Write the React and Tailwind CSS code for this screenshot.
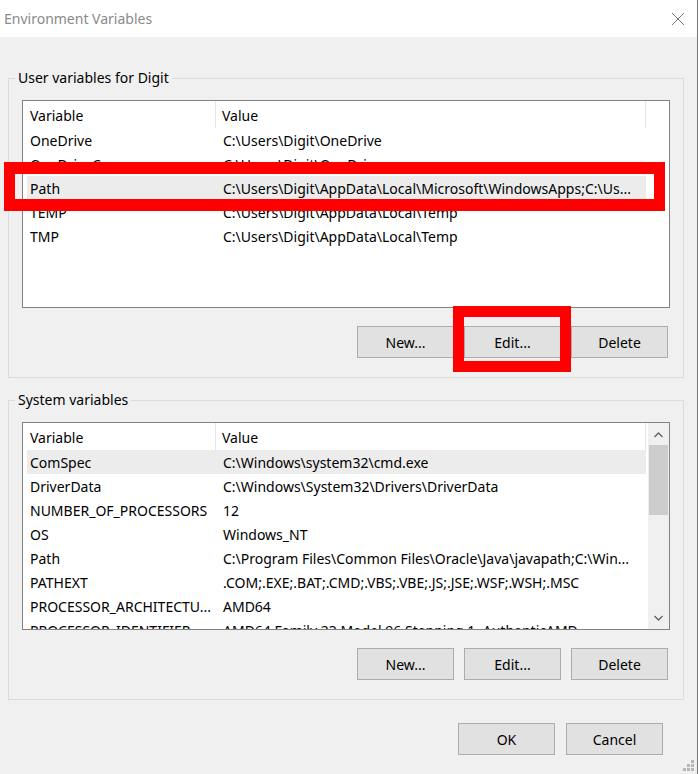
import React from "react";

const userVars = [
  { name: "OneDrive", value: "C:\\Users\\Digit\\OneDrive" },
  { name: "OneDriveConsumer", value: "C:\\Users\\Digit\\OneDrive" },
  { name: "Path", value: "C:\\Users\\Digit\\AppData\\Local\\Microsoft\\WindowsApps;C:\\Us...", selected: true },
  { name: "TEMP", value: "C:\\Users\\Digit\\AppData\\Local\\Temp" },
  { name: "TMP", value: "C:\\Users\\Digit\\AppData\\Local\\Temp" },
];

const systemVars = [
  { name: "ComSpec", value: "C:\\Windows\\system32\\cmd.exe", selected: true },
  { name: "DriverData", value: "C:\\Windows\\System32\\Drivers\\DriverData" },
  { name: "NUMBER_OF_PROCESSORS", value: "12" },
  { name: "OS", value: "Windows_NT" },
  { name: "Path", value: "C:\\Program Files\\Common Files\\Oracle\\Java\\javapath;C:\\Win..." },
  { name: "PATHEXT", value: ".COM;.EXE;.BAT;.CMD;.VBS;.VBE;.JS;.JSE;.WSF;.WSH;.MSC" },
  { name: "PROCESSOR_ARCHITECTU...", value: "AMD64" },
  { name: "PROCESSOR_IDENTIFIER", value: "AMD64 Family 23 Model 96 Stepping 1, AuthenticAMD" },
];

function Button({ children }) {
  return (
    <div className="w-[97px] h-[32px] flex items-center justify-center bg-[#e1e1e1] border border-[#adadad] text-black">
      {children}
    </div>
  );
}

function VarList({ rows, scroll }) {
  return (
    <div className="ml-[13px] w-[648px] h-[208px] bg-white border border-[#828282] flex overflow-hidden">
      <div className="flex-1 overflow-hidden">
        {/* header */}
        <div className="flex h-[27px] items-center">
          <div className="w-[193px] h-full pl-[7px] pt-[2px] flex items-center border-r border-[#e5e5e5]">Variable</div>
          <div className="w-[430px] h-full pl-[6px] pt-[2px] flex items-center border-r border-[#e5e5e5]">Value</div>
        </div>
        {rows.map((r) => (
          <div
            key={r.name}
            className={
              "flex h-[24px] items-center pt-[1px] ml-[4px] w-[619px] whitespace-nowrap " +
              (r.selected ? "bg-[#ececec]" : "")
            }
          >
            <div className="w-[189px] pl-[3px] overflow-hidden">{r.name}</div>
            <div className="flex-1 pl-[7px] overflow-hidden">{r.value}</div>
          </div>
        ))}
      </div>
      {scroll && (
        <div className="w-[21px] h-full bg-[#f0f0f0] flex flex-col items-center">
          <svg width="21" height="22" viewBox="0 0 21 22" className="shrink-0">
            <path d="M6.5 14 L10.5 10 L14.5 14" fill="none" stroke="#606060" strokeWidth="1.3" />
          </svg>
          <div className="w-[19px] h-[70px] bg-[#cdcdcd]" />
          <div className="flex-1" />
          <svg width="21" height="22" viewBox="0 0 21 22" className="shrink-0">
            <path d="M6.5 9 L10.5 13 L14.5 9" fill="none" stroke="#606060" strokeWidth="1.3" />
          </svg>
        </div>
      )}
    </div>
  );
}

function Group({ label, rows, scroll, className }) {
  return (
    <div className={"relative mx-[8px] w-[676px] border border-[#dcdcdc] pt-[21px] pb-[19px] " + className}>
      <span className="absolute left-[6px] top-[-11px] px-[3px] bg-[#f0f0f0] leading-[20px]">{label}</span>
      <VarList rows={rows} scroll={scroll} />
      <div className="flex justify-end gap-[10px] mt-[18px] pr-[15px]">
        <Button>New...</Button>
        <Button>Edit...</Button>
        <Button>Delete</Button>
      </div>
    </div>
  );
}

export default function App() {
  return (
    <div
      className="relative w-[699px] h-[774px] bg-[#f0f0f0] text-[14px] text-black overflow-hidden"
      style={{ fontFamily: '"Noto Sans", "Open Sans", sans-serif' }}
    >
      {/* window right edge */}
      <div className="absolute right-0 top-0 w-[2px] h-full bg-white border-l border-[#777]" />

      {/* title bar */}
      <div className="h-[37px] bg-white flex items-center justify-between pl-[4px] pr-[14px]">
        <span className="text-[#8a8a8a]">Environment Variables</span>
        <svg width="14" height="14" viewBox="0 0 14 14">
          <path d="M1 1 L13 13 M13 1 L1 13" stroke="#777" strokeWidth="1" />
        </svg>
      </div>

      <Group label="User variables for Digit" rows={userVars} className="mt-[41px]" />
      <Group label="System variables" rows={systemVars} scroll className="mt-[22px]" />

      <div className="flex justify-end gap-[11px] mt-[23px] pr-[36px]">
        <Button>OK</Button>
        <Button>Cancel</Button>
      </div>

      {/* resize grip */}
      <svg className="absolute right-[4px] bottom-[2px]" width="12" height="12" viewBox="0 0 12 12">
        {[[8, 0], [4, 4], [8, 4], [0, 8], [4, 8], [8, 8]].map(([x, y]) => (
          <rect key={x + "-" + y} x={x} y={y} width="3" height="3" fill="#b8b8b8" />
        ))}
      </svg>

      {/* red highlight boxes */}
      <div className="absolute left-[4px] top-[162px] w-[661px] h-[49px] border-x-[11px] border-y-[12px] border-[#ff0000]" />
      <div className="absolute left-[453px] top-[306px] w-[118px] h-[66px] border-[11px] border-[#ff0000]" />
    </div>
  );
}
